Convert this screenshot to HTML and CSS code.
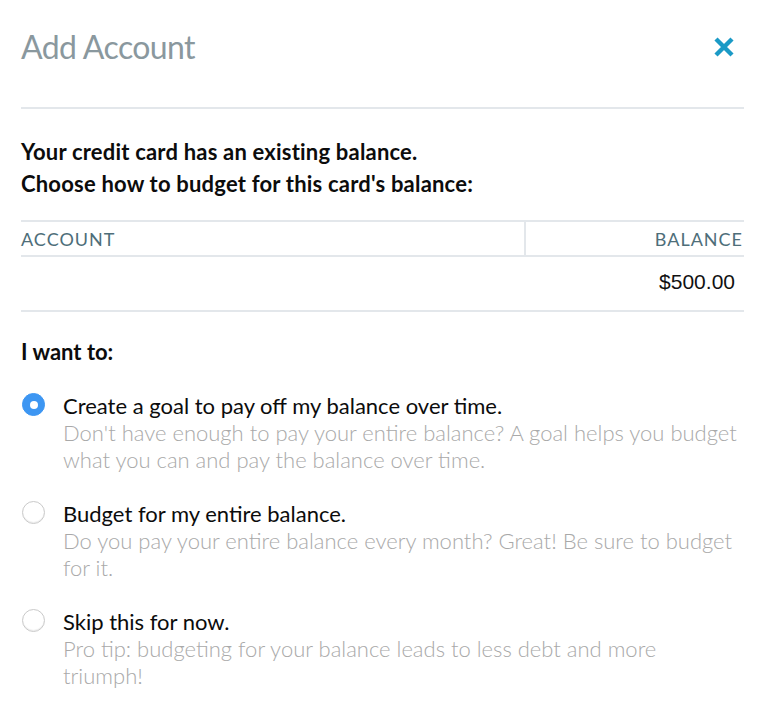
FILE: index.html
```html
<!DOCTYPE html>
<html>
<head>
<meta charset="utf-8">
<link rel="stylesheet" href="styles.css">
</head>
<body>
<div class="modal">
  <header class="modal-header">
    <h1 class="title">Add Account</h1>
    <button class="close" aria-label="Close">
      <svg width="22" height="22" viewBox="0 0 22 22"><path d="M3 3 L19 19 M19 3 L3 19" stroke="#1b9ac6" stroke-width="4.4" stroke-linecap="butt"/></svg>
    </button>
  </header>
  <div class="intro">
    <p>Your credit card has an existing balance.<br>Choose how to budget for this card's balance:</p>
  </div>
  <div class="table">
    <div class="thead">
      <div class="th th-account">ACCOUNT</div>
      <div class="th th-balance">BALANCE</div>
    </div>
    <div class="trow">
      <div class="td"></div>
      <div class="td td-balance">$500.00</div>
    </div>
  </div>
  <h2 class="want">I want to:</h2>
  <ul class="options">
    <li class="option">
      <span class="radio checked"></span>
      <div class="opt-text">
        <div class="opt-title">Create a goal to pay off my balance over time.</div>
        <div class="opt-desc">Don't have enough to pay your entire balance? A goal helps you budget what you can and pay the balance over time.</div>
      </div>
    </li>
    <li class="option">
      <span class="radio"></span>
      <div class="opt-text">
        <div class="opt-title">Budget for my entire balance.</div>
        <div class="opt-desc">Do you pay your entire balance every month? Great! Be sure to budget for it.</div>
      </div>
    </li>
    <li class="option">
      <span class="radio"></span>
      <div class="opt-text">
        <div class="opt-title">Skip this for now.</div>
        <div class="opt-desc">Pro tip: budgeting for your balance leads to less debt and more triumph!</div>
      </div>
    </li>
  </ul>
</div>
</body>
</html>
```
FILE: styles.css
```css
* { box-sizing: border-box; }
html, body { margin: 0; padding: 0; background: #fff; }
body { font-family: Lato, "Open Sans", sans-serif; color: #111; }
.modal { width: 768px; padding: 0 24px 0 21px; }
.modal-header {
  display: flex; justify-content: space-between; align-items: center;
  height: 109px; border-bottom: 2px solid #e3e7eb; padding-bottom: 14px;
}
.title { margin: 0; font-weight: 400; font-size: 32px; color: #8a989e; letter-spacing: -0.6px; }
.close { border: 0; background: none; padding: 0; margin-right: 9px; width: 22px; height: 22px; }
.close svg { display: block; }
.intro { padding-top: 27px; }
.intro p { margin: 0; font-size: 22px; font-weight: 700; line-height: 32px; color: #0c0c0c; letter-spacing: 0.2px; }
.table { margin-top: 20px; }
.thead { display: flex; height: 37px; border-top: 2px solid #e3e7eb; border-bottom: 2px solid #e3e7eb; }
.th { font-size: 18px; color: #4e6e79; letter-spacing: 1px; display: flex; align-items: center; }
.th-account { width: 505px; border-right: 2px solid #e3e7eb; }
.th-balance { flex: 1; justify-content: flex-end; padding-right: 1px; }
.trow { display: flex; height: 55px; border-bottom: 2px solid #e3e7eb; }
.td { flex: 1; }
.td-balance { text-align: right; font-family: "Liberation Sans", Arial, sans-serif; font-size: 21px; color: #111; padding: 13px 9px 0 0; }
.want { margin: 27px 0 0; font-size: 22px; font-weight: 700; color: #0c0c0c; line-height: 26px; }
.options { list-style: none; margin: 27px 0 0; padding: 0; }
.option { display: flex; margin-bottom: 27px; }
.radio {
  flex: none; width: 23px; height: 23px; border-radius: 50%;
  border: 1px solid #c9c9c9; box-shadow: inset 0 -1px 1px rgba(0,0,0,0.08);
  margin: 1px 18px 0 1px; position: relative; background: #fff;
}
.radio.checked { background: #3d96f2; border-color: #3d96f2; box-shadow: none; }
.radio.checked::after {
  content: ""; position: absolute; left: 50%; top: 50%; width: 8px; height: 8px;
  margin: -4px 0 0 -4px; border-radius: 50%; background: #fff;
}
.opt-text { flex: 1; padding-right: 6px; }
.opt-title { font-size: 22px; line-height: 27px; color: #0c0c0c; }
.opt-desc { font-size: 22px; line-height: 27px; color: #a9a9a9; font-weight: 300; }
```
